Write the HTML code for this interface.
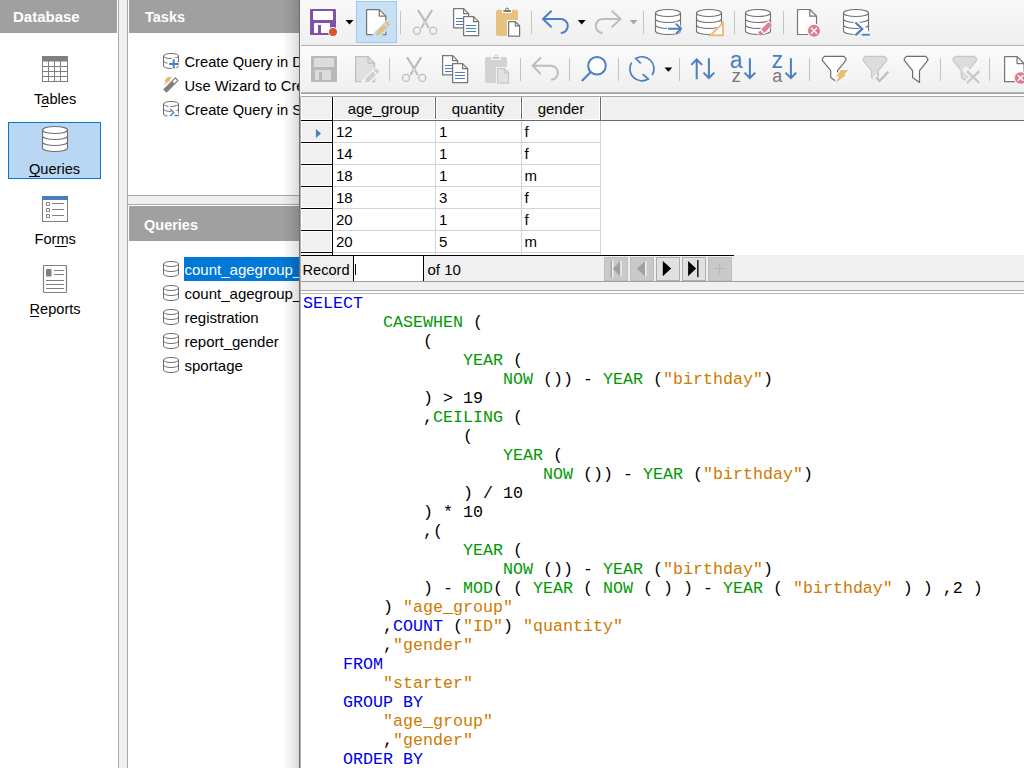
<!DOCTYPE html>
<html><head><meta charset="utf-8"><title>Base</title>
<style>html,body{margin:0;padding:0;background:#fff;width:1024px;height:768px;overflow:hidden}svg{display:block}</style>
</head><body>
<svg width="1024" height="768" viewBox="0 0 1024 768">
<rect x="0" y="0" width="117" height="33" fill="#a0a0a0"/><rect x="118" y="0" width="1" height="768" fill="#a8a8a8"/><rect x="119" y="0" width="8" height="768" fill="#f0f0f0"/><rect x="127" y="0" width="1" height="768" fill="#a8a8a8"/><rect x="129" y="0" width="180" height="33" fill="#a0a0a0"/><rect x="128" y="195" width="180" height="1" fill="#a8a8a8"/><rect x="128" y="196" width="180" height="8" fill="#f0f0f0"/><rect x="128" y="204" width="180" height="1" fill="#a8a8a8"/><rect x="129" y="206" width="180" height="35" fill="#a0a0a0"/><text x="13" y="21.8" font-family="Liberation Sans" font-size="15" font-weight="bold" fill="#fff">Database</text><text x="145" y="22" font-family="Liberation Sans" font-size="14.5" font-weight="bold" fill="#fff">Tasks</text><text x="144" y="230" font-family="Liberation Sans" font-size="14.5" font-weight="bold" fill="#fff">Queries</text><rect x="8.5" y="122.5" width="92" height="56" fill="#b9d7f2" stroke="#0078d7" stroke-width="1"/><rect x="42.5" y="56.5" width="25" height="25" fill="#fff" stroke="#808080" stroke-width="1"/><rect x="42" y="56" width="26" height="5.5" fill="#808080"/><path d="M42,66.5 H68 M42,71.5 H68 M42,76.5 H68 M48.5,61 V82 M54.5,61 V82 M60.5,61 V82" stroke="#808080" stroke-width="1"/><path d="M42.5,130 L42.5,148 A12.5,3.5 0 0 0 67.5,148 L67.5,130 Z" fill="#fff"/><ellipse cx="55" cy="130" rx="12.5" ry="3.5" fill="#fff" stroke="#6e6e6e" stroke-width="1.1"/><path d="M42.5,130 L42.5,148 M67.5,130 L67.5,148" stroke="#6e6e6e" stroke-width="1.1" fill="none"/><path d="M42.5,136 A12.5,3.5 0 0 0 67.5,136" stroke="#6e6e6e" stroke-width="1.1" fill="none"/><path d="M42.5,142 A12.5,3.5 0 0 0 67.5,142" stroke="#6e6e6e" stroke-width="1.1" fill="none"/><path d="M42.5,148 A12.5,3.5 0 0 0 67.5,148" stroke="#6e6e6e" stroke-width="1.1" fill="none"/><rect x="42.5" y="196.5" width="25" height="25" fill="#fff" stroke="#808080" stroke-width="1"/><rect x="42" y="196" width="26" height="4" fill="#4a7ebb"/><path d="M46.5,202.5 h3 v3 h-3 z M46.5,208.5 h3 v3 h-3 z M46.5,214.5 h3 v3 h-3 z" fill="none" stroke="#808080" stroke-width="1"/><path d="M52,203.5 H64 M52,209.5 H64 M52,215.5 H64" stroke="#808080" stroke-width="1"/><rect x="43.5" y="265.5" width="23" height="27" fill="#fff" stroke="#808080" stroke-width="1.2" rx="0.8"/><rect x="46" y="269" width="5.5" height="7.5" rx="0.8" fill="#808080"/><path d="M54,270.5 H64 M54,274.5 H64 M46,280.5 H64 M46,284.5 H64 M46,288.5 H64" stroke="#808080" stroke-width="1"/><text x="34" y="103.8" font-family="Liberation Sans" font-size="14.6" fill="#000">Tables</text><rect x="41" y="106" width="7" height="1" fill="#000"/><text x="29" y="174" font-family="Liberation Sans" font-size="14.6" fill="#000">Queries</text><rect x="29" y="176" width="11" height="1" fill="#000"/><text x="34.5" y="243.8" font-family="Liberation Sans" font-size="14.6" fill="#000">Forms</text><rect x="55" y="246" width="12" height="1" fill="#000"/><text x="29.5" y="313.8" font-family="Liberation Sans" font-size="14.6" fill="#000">Reports</text><rect x="30" y="316" width="9" height="1" fill="#000"/><path d="M163.5,56 L163.5,66 A7.5,2.5 0 0 0 178.5,66 L178.5,56 Z" fill="#fff"/><ellipse cx="171" cy="56" rx="7.5" ry="2.5" fill="#fff" stroke="#707070" stroke-width="1.0"/><path d="M163.5,56 L163.5,66 M178.5,56 L178.5,66" stroke="#707070" stroke-width="1.0" fill="none"/><path d="M163.5,61 A7.5,2.5 0 0 0 178.5,61" stroke="#707070" stroke-width="1.0" fill="none"/><path d="M163.5,66 A7.5,2.5 0 0 0 178.5,66" stroke="#707070" stroke-width="1.0" fill="none"/><path d="M167.5,63.9 H180 M173.7,58 V70" stroke="#fff" stroke-width="4"/><path d="M169.2,63.9 H178.8 M173.7,59.2 V68.6" stroke="#4a7fc1" stroke-width="2"/><path d="M163.1,89.4 L175.4,77.1 L178.75,80.5 L166.6,92.75 Z" fill="#808080"/><path d="M172.6,81.6 L175.4,78.8 L177,80.4 L174.2,83.2 Z" fill="#fff"/><path d="M167.5,77 H172 L169.3,80.2 H170.5 L163.2,85.8 L166.2,81.3 H164 Z" fill="#e8b868"/><path d="M163.5,104 L163.5,114 A7.5,2.5 0 0 0 178.5,114 L178.5,104 Z" fill="#fff"/><ellipse cx="171" cy="104" rx="7.5" ry="2.5" fill="#fff" stroke="#707070" stroke-width="1.0"/><path d="M163.5,104 L163.5,114 M178.5,104 L178.5,114" stroke="#707070" stroke-width="1.0" fill="none"/><path d="M163.5,109 A7.5,2.5 0 0 0 178.5,109" stroke="#707070" stroke-width="1.0" fill="none"/><path d="M163.5,114 A7.5,2.5 0 0 0 178.5,114" stroke="#707070" stroke-width="1.0" fill="none"/><path d="M168,107 L175.5,112.6 L168,118 M172.5,115.3 H180" stroke="#fff" stroke-width="3.5" fill="none"/><path d="M170.2,108.9 L173.7,112.5 L170.2,116.1 M174.4,115.5 H178.8" stroke="#4a7fc1" stroke-width="1.4" fill="none"/><text x="184.5" y="66.8" font-family="Liberation Sans" font-size="14.7" fill="#000">Create Query in Design...</text><text x="184.5" y="90.7" font-family="Liberation Sans" font-size="14.7" fill="#000">Use Wizard to Create Query...</text><text x="184.5" y="114.5" font-family="Liberation Sans" font-size="14.7" fill="#000">Create Query in SQL View...</text><path d="M163.5,264 L163.5,274 A7.5,2.5 0 0 0 178.5,274 L178.5,264 Z" fill="#fff"/><ellipse cx="171" cy="264" rx="7.5" ry="2.5" fill="#fff" stroke="#707070" stroke-width="1.0"/><path d="M163.5,264 L163.5,274 M178.5,264 L178.5,274" stroke="#707070" stroke-width="1.0" fill="none"/><path d="M163.5,269 A7.5,2.5 0 0 0 178.5,269" stroke="#707070" stroke-width="1.0" fill="none"/><path d="M163.5,274 A7.5,2.5 0 0 0 178.5,274" stroke="#707070" stroke-width="1.0" fill="none"/><rect x="184" y="257" width="130" height="24" fill="#0078d7"/><text x="184.5" y="274.5" font-family="Liberation Sans" font-size="15" fill="#fff">count_agegroup_gender</text><path d="M163.5,288 L163.5,298 A7.5,2.5 0 0 0 178.5,298 L178.5,288 Z" fill="#fff"/><ellipse cx="171" cy="288" rx="7.5" ry="2.5" fill="#fff" stroke="#707070" stroke-width="1.0"/><path d="M163.5,288 L163.5,298 M178.5,288 L178.5,298" stroke="#707070" stroke-width="1.0" fill="none"/><path d="M163.5,293 A7.5,2.5 0 0 0 178.5,293" stroke="#707070" stroke-width="1.0" fill="none"/><path d="M163.5,298 A7.5,2.5 0 0 0 178.5,298" stroke="#707070" stroke-width="1.0" fill="none"/><text x="184.5" y="298.5" font-family="Liberation Sans" font-size="15" fill="#000">count_agegroup_gender_2</text><path d="M163.5,312 L163.5,322 A7.5,2.5 0 0 0 178.5,322 L178.5,312 Z" fill="#fff"/><ellipse cx="171" cy="312" rx="7.5" ry="2.5" fill="#fff" stroke="#707070" stroke-width="1.0"/><path d="M163.5,312 L163.5,322 M178.5,312 L178.5,322" stroke="#707070" stroke-width="1.0" fill="none"/><path d="M163.5,317 A7.5,2.5 0 0 0 178.5,317" stroke="#707070" stroke-width="1.0" fill="none"/><path d="M163.5,322 A7.5,2.5 0 0 0 178.5,322" stroke="#707070" stroke-width="1.0" fill="none"/><text x="184.5" y="322.5" font-family="Liberation Sans" font-size="15" fill="#000">registration</text><path d="M163.5,336 L163.5,346 A7.5,2.5 0 0 0 178.5,346 L178.5,336 Z" fill="#fff"/><ellipse cx="171" cy="336" rx="7.5" ry="2.5" fill="#fff" stroke="#707070" stroke-width="1.0"/><path d="M163.5,336 L163.5,346 M178.5,336 L178.5,346" stroke="#707070" stroke-width="1.0" fill="none"/><path d="M163.5,341 A7.5,2.5 0 0 0 178.5,341" stroke="#707070" stroke-width="1.0" fill="none"/><path d="M163.5,346 A7.5,2.5 0 0 0 178.5,346" stroke="#707070" stroke-width="1.0" fill="none"/><text x="184.5" y="346.5" font-family="Liberation Sans" font-size="15" fill="#000">report_gender</text><path d="M163.5,360 L163.5,370 A7.5,2.5 0 0 0 178.5,370 L178.5,360 Z" fill="#fff"/><ellipse cx="171" cy="360" rx="7.5" ry="2.5" fill="#fff" stroke="#707070" stroke-width="1.0"/><path d="M163.5,360 L163.5,370 M178.5,360 L178.5,370" stroke="#707070" stroke-width="1.0" fill="none"/><path d="M163.5,365 A7.5,2.5 0 0 0 178.5,365" stroke="#707070" stroke-width="1.0" fill="none"/><path d="M163.5,370 A7.5,2.5 0 0 0 178.5,370" stroke="#707070" stroke-width="1.0" fill="none"/><text x="184.5" y="370.5" font-family="Liberation Sans" font-size="15" fill="#000">sportage</text><defs><linearGradient id="sh" x1="0" x2="1" y1="0" y2="0"><stop offset="0" stop-color="#000" stop-opacity="0"/><stop offset="0.5" stop-color="#000" stop-opacity="0.06"/><stop offset="1" stop-color="#000" stop-opacity="0.145"/></linearGradient></defs><rect x="282" y="0" width="17" height="768" fill="url(#sh)"/>
<defs><linearGradient id="tb1" x1="0" x2="0" y1="0" y2="1"><stop offset="0" stop-color="#f9f9f9"/><stop offset="1" stop-color="#efefef"/></linearGradient><linearGradient id="tb2" x1="0" x2="0" y1="0" y2="1"><stop offset="0" stop-color="#fbfbfb"/><stop offset="1" stop-color="#efefef"/></linearGradient></defs><rect x="299" y="0" width="725" height="768" fill="#fff"/><rect x="301" y="0" width="723" height="45" fill="url(#tb1)"/><rect x="301" y="45" width="723" height="1" fill="#b0b0b0"/><rect x="301" y="46" width="723" height="1" fill="#ffffff"/><rect x="301" y="47" width="723" height="46" fill="url(#tb2)"/><rect x="301" y="92" width="723" height="1" fill="#b8b8b8"/><rect x="301" y="93" width="723" height="1" fill="#a0a0a0"/><rect x="301" y="94" width="723" height="2" fill="#fdfdfd"/><rect x="301" y="96" width="723" height="1" fill="#a8a8a8"/><rect x="300" y="97" width="724" height="23" fill="#f0f0f0"/><rect x="300" y="120" width="33" height="1" fill="#000"/><rect x="333" y="120" width="691" height="1" fill="#6b6b6b"/><rect x="300" y="121" width="32" height="134" fill="#f0f0f0"/><rect x="332" y="97" width="1" height="158" fill="#000"/><rect x="435" y="97" width="1" height="23" fill="#6b6b6b"/><rect x="434" y="97" width="1" height="22" fill="#fff"/><rect x="436" y="97" width="1" height="22" fill="#fff"/><rect x="435" y="121" width="1" height="134" fill="#d4d4d4"/><rect x="521" y="97" width="1" height="23" fill="#6b6b6b"/><rect x="520" y="97" width="1" height="22" fill="#fff"/><rect x="522" y="97" width="1" height="22" fill="#fff"/><rect x="521" y="121" width="1" height="134" fill="#d4d4d4"/><rect x="600" y="97" width="1" height="23" fill="#6b6b6b"/><rect x="599" y="97" width="1" height="22" fill="#fff"/><rect x="601" y="97" width="1" height="22" fill="#fff"/><rect x="600" y="121" width="1" height="134" fill="#d4d4d4"/><rect x="333" y="119" width="267" height="1" fill="#fff"/><rect x="333" y="97" width="1" height="22" fill="#fff"/><rect x="301" y="97" width="1" height="22" fill="#fff"/><rect x="331" y="97" width="1" height="22" fill="#fff"/><rect x="301" y="119" width="31" height="1" fill="#fff"/><rect x="301" y="121" width="1" height="20" fill="#fff"/><rect x="331" y="121" width="1" height="20" fill="#fff"/><rect x="301" y="121" width="31" height="1" fill="#fff"/><rect x="301" y="141" width="31" height="1" fill="#fff"/><rect x="301" y="143" width="1" height="20" fill="#fff"/><rect x="331" y="143" width="1" height="20" fill="#fff"/><rect x="301" y="143" width="31" height="1" fill="#fff"/><rect x="301" y="163" width="31" height="1" fill="#fff"/><rect x="301" y="165" width="1" height="20" fill="#fff"/><rect x="331" y="165" width="1" height="20" fill="#fff"/><rect x="301" y="165" width="31" height="1" fill="#fff"/><rect x="301" y="185" width="31" height="1" fill="#fff"/><rect x="301" y="187" width="1" height="20" fill="#fff"/><rect x="331" y="187" width="1" height="20" fill="#fff"/><rect x="301" y="187" width="31" height="1" fill="#fff"/><rect x="301" y="207" width="31" height="1" fill="#fff"/><rect x="301" y="209" width="1" height="20" fill="#fff"/><rect x="331" y="209" width="1" height="20" fill="#fff"/><rect x="301" y="209" width="31" height="1" fill="#fff"/><rect x="301" y="229" width="31" height="1" fill="#fff"/><rect x="301" y="231" width="1" height="20" fill="#fff"/><rect x="331" y="231" width="1" height="20" fill="#fff"/><rect x="301" y="231" width="31" height="1" fill="#fff"/><rect x="301" y="251" width="31" height="1" fill="#fff"/><rect x="301" y="253" width="1" height="20" fill="#fff"/><rect x="331" y="253" width="1" height="20" fill="#fff"/><rect x="301" y="253" width="31" height="1" fill="#fff"/><rect x="301" y="273" width="31" height="1" fill="#fff"/><rect x="300" y="142" width="32" height="1" fill="#000"/><rect x="333" y="142" width="268" height="1" fill="#d4d4d4"/><text x="336" y="137" font-family="Liberation Sans" font-size="15" fill="#000">12</text><text x="439" y="137" font-family="Liberation Sans" font-size="15" fill="#000">1</text><text x="524.5" y="137" font-family="Liberation Sans" font-size="15" fill="#000">f</text><rect x="300" y="164" width="32" height="1" fill="#000"/><rect x="333" y="164" width="268" height="1" fill="#d4d4d4"/><text x="336" y="159" font-family="Liberation Sans" font-size="15" fill="#000">14</text><text x="439" y="159" font-family="Liberation Sans" font-size="15" fill="#000">1</text><text x="524.5" y="159" font-family="Liberation Sans" font-size="15" fill="#000">f</text><rect x="300" y="186" width="32" height="1" fill="#000"/><rect x="333" y="186" width="268" height="1" fill="#d4d4d4"/><text x="336" y="181" font-family="Liberation Sans" font-size="15" fill="#000">18</text><text x="439" y="181" font-family="Liberation Sans" font-size="15" fill="#000">1</text><text x="524.5" y="181" font-family="Liberation Sans" font-size="15" fill="#000">m</text><rect x="300" y="208" width="32" height="1" fill="#000"/><rect x="333" y="208" width="268" height="1" fill="#d4d4d4"/><text x="336" y="203" font-family="Liberation Sans" font-size="15" fill="#000">18</text><text x="439" y="203" font-family="Liberation Sans" font-size="15" fill="#000">3</text><text x="524.5" y="203" font-family="Liberation Sans" font-size="15" fill="#000">f</text><rect x="300" y="230" width="32" height="1" fill="#000"/><rect x="333" y="230" width="268" height="1" fill="#d4d4d4"/><text x="336" y="225" font-family="Liberation Sans" font-size="15" fill="#000">20</text><text x="439" y="225" font-family="Liberation Sans" font-size="15" fill="#000">1</text><text x="524.5" y="225" font-family="Liberation Sans" font-size="15" fill="#000">f</text><rect x="300" y="252" width="32" height="1" fill="#000"/><rect x="333" y="252" width="268" height="1" fill="#d4d4d4"/><text x="336" y="247" font-family="Liberation Sans" font-size="15" fill="#000">20</text><text x="439" y="247" font-family="Liberation Sans" font-size="15" fill="#000">5</text><text x="524.5" y="247" font-family="Liberation Sans" font-size="15" fill="#000">m</text><path d="M315.9,129 L321,133.4 L315.9,137.9 Z" fill="#4a7fc1"/><text x="383.5" y="114.2" text-anchor="middle" font-family="Liberation Sans" font-size="15" fill="#000">age_group</text><text x="478" y="114.2" text-anchor="middle" font-family="Liberation Sans" font-size="15" fill="#000">quantity</text><text x="561" y="114.2" text-anchor="middle" font-family="Liberation Sans" font-size="15" fill="#000">gender</text><rect x="300" y="255" width="724" height="26" fill="#f0f0f0"/><rect x="300" y="255" width="434" height="1" fill="#000"/><rect x="300" y="281" width="724" height="1" fill="#a0a0a0"/><rect x="300" y="282" width="724" height="8" fill="#f0f0f0"/><rect x="300" y="290" width="724" height="1" fill="#a8a8a8"/><rect x="300" y="291" width="724" height="2" fill="#ffffff"/><rect x="300" y="293" width="724" height="1" fill="#b4b4bb"/><rect x="353" y="256" width="71" height="25" fill="#fff"/><rect x="353" y="256" width="1" height="25" fill="#000"/><rect x="423" y="256" width="1" height="25" fill="#000"/><text x="302.5" y="274.8" font-family="Liberation Sans" font-size="14.6" fill="#000">Record</text><rect x="355" y="264" width="1" height="11" fill="#200000"/><text x="427.5" y="274.8" font-family="Liberation Sans" font-size="15" fill="#000">of 10</text><rect x="604.5" y="257.5" width="23" height="23" fill="#c9c9c9" stroke="#bdbdbd" stroke-width="1"/><rect x="630.5" y="257.5" width="23" height="23" fill="#c9c9c9" stroke="#bdbdbd" stroke-width="1"/><rect x="656.5" y="257.5" width="23" height="23" fill="#e1e1e1" stroke="#adadad" stroke-width="1"/><rect x="682.5" y="257.5" width="23" height="23" fill="#e1e1e1" stroke="#adadad" stroke-width="1"/><rect x="708.5" y="257.5" width="23" height="23" fill="#c9c9c9" stroke="#bdbdbd" stroke-width="1"/><rect x="611.8" y="260.6" width="1.6" height="17" fill="#f4f4f4"/><rect x="610.6" y="260.6" width="1.2" height="17" fill="#a0a0a0"/><path d="M612.9,268.8 L620.4,261.1 L620.4,276.4 Z" fill="#a0a0a0"/><rect x="620.4" y="261.1" width="1.4" height="15.3" fill="#f4f4f4"/><path d="M637,268.8 L645.1,261.1 L645.1,276.4 Z" fill="#a0a0a0"/><rect x="645.1" y="261.1" width="1.4" height="15.3" fill="#f4f4f4"/><path d="M662.8,261.1 L671.1,268.6 L662.8,276.2 Z" fill="#000"/><path d="M688.1,261.1 L696.1,268.6 L688.1,276.2 Z" fill="#000"/><rect x="697.2" y="260" width="1.3" height="17.2" fill="#000"/><path d="M714,268.5 H725 M719.5,263 V274" stroke="#b8b8b8" stroke-width="1"/><rect x="299" y="0" width="1" height="768" fill="#707070"/><rect x="300" y="0" width="1" height="97" fill="#f4f4f4"/><rect x="300" y="97" width="1" height="671" fill="#b0b0b0"/>
<rect x="310" y="9" width="26" height="26" rx="1" fill="#8150a8"/><rect x="313" y="11" width="20" height="9" rx="0.8" fill="#fff"/><rect x="314" y="23" width="16" height="10" rx="0.8" fill="#fff"/><rect x="318" y="25" width="3" height="8" fill="#8150a8"/><circle cx="333" cy="32" r="5" fill="#fff"/><circle cx="333" cy="32" r="4" fill="#d9532c"/><path d="M345.5,20 L353.5,20 L349.5,24.5 Z" fill="#000"/><rect x="356.5" y="1.5" width="40" height="41" fill="#c7e0f6" stroke="#99c8f0" stroke-width="1"/><path d="M366.6,9.6 L379.3,9.6 L385.8,16.1 L385.8,34.6 L366.6,34.6 Z" fill="#fff" stroke="#767676" stroke-width="1.25" stroke-linejoin="round"/><path d="M379.3,9.6 L379.3,16.1 L385.8,16.1" fill="none" stroke="#767676" stroke-width="1.25" stroke-linejoin="round"/><path d="M375,37 L389.5,22.5" stroke="#c7e0f6" stroke-width="8" stroke-linecap="butt"/><path d="M376,35.8 L377,31.3 L383.8,24.5 L387,27.7 L380.2,34.5 Z" fill="#e8be78"/><path d="M385,23.3 L386.9,21.4 L390.1,24.6 L388.2,26.5 Z" fill="#e8be78" stroke="#e8be78" stroke-width="0.6" stroke-linejoin="round"/><rect x="400" y="11" width="1" height="23" fill="#c4c4c4"/><path d="M418.00,10.00 L425.10,21.40 L432.20,10.00" stroke="#bcbcbc" stroke-width="2.2" fill="none" stroke-linejoin="round"/><path d="M425.10,21.40 L421.40,28.00 M425.10,21.40 L428.80,28.00" stroke="#bcbcbc" stroke-width="2" fill="none"/><circle cx="425.10" cy="22.60" r="0.9" fill="#f6f6f6"/><circle cx="417.00" cy="30.70" r="3.5" fill="none" stroke="#bcbcbc" stroke-width="1.3"/><circle cx="433.20" cy="30.70" r="3.5" fill="none" stroke="#bcbcbc" stroke-width="1.3"/><path d="M453.6,8.6 L463.6,8.6 L468.6,13.6 L468.6,27.799999999999997 L453.6,27.799999999999997 Z" fill="#fff" stroke="#767676" stroke-width="1.25" stroke-linejoin="round"/><path d="M463.6,8.6 L463.6,13.6 L468.6,13.6" fill="none" stroke="#767676" stroke-width="1.25" stroke-linejoin="round"/><path d="M456,18.5 H463 M456,21.5 H463 M456,24.5 H463" stroke="#4a7fc1" stroke-width="1.1"/><rect x="462" y="15" width="18" height="22" fill="#fff" opacity="0"/><path d="M463.6,16.6 L473.6,16.6 L478.6,21.6 L478.6,35.6 L463.6,35.6 Z" fill="#fff" stroke="#767676" stroke-width="1.25" stroke-linejoin="round"/><path d="M473.6,16.6 L473.6,21.6 L478.6,21.6" fill="none" stroke="#767676" stroke-width="1.25" stroke-linejoin="round"/><path d="M466,25.5 H476 M466,28.5 H476 M466,31.5 H476" stroke="#4a7fc1" stroke-width="1.1"/><rect x="496" y="9.8" width="22" height="26.2" rx="2" fill="#e8c280"/><rect x="502" y="9" width="10" height="4" fill="#fff"/><rect x="503.3" y="10.2" width="7.6" height="1.7" fill="#6e6e6e"/><circle cx="507.1" cy="9.6" r="1.5" fill="none" stroke="#6e6e6e" stroke-width="1"/><rect x="507" y="20" width="11" height="16" fill="#fff"/><path d="M508.6,21.6 L515.4,21.6 L519.6,25.8 L519.6,36.2 L508.6,36.2 Z" fill="#fff" stroke="#767676" stroke-width="1.25" stroke-linejoin="round"/><path d="M515.4,21.6 L515.4,25.8 L519.6,25.8" fill="none" stroke="#767676" stroke-width="1.25" stroke-linejoin="round"/><rect x="531" y="11" width="1" height="23" fill="#c4c4c4"/><path d="M551.6,10.7 L543,19 L551.6,27.3 M543,19 H560.8 A7,7 0 0 1 560.8,33" stroke="#4a7fc1" stroke-width="2" fill="none" stroke-linejoin="miter"/><path d="M577.8,20 L585.6,20 L581.7,24.4 Z" fill="#000"/><path d="M611.7,10.7 L620.6,19 L611.7,27.3 M620.6,19 H602.8 A7,7 0 0 0 602.8,33" stroke="#bdbdbd" stroke-width="2" fill="none"/><path d="M629.8,20 L637.4,20 L633.5999999999999,24.4 Z" fill="#a8a8a8"/><rect x="643" y="11" width="1" height="23" fill="#c4c4c4"/><path d="M655.5,13 L655.5,31 A12.5,3.5 0 0 0 680.5,31 L680.5,13 Z" fill="#fff"/><ellipse cx="668" cy="13" rx="12.5" ry="3.5" fill="#fff" stroke="#707070" stroke-width="1.1"/><path d="M655.5,13 L655.5,31 M680.5,13 L680.5,31" stroke="#707070" stroke-width="1.1" fill="none"/><path d="M655.5,19 A12.5,3.5 0 0 0 680.5,19" stroke="#707070" stroke-width="1.1" fill="none"/><path d="M655.5,25 A12.5,3.5 0 0 0 680.5,25" stroke="#707070" stroke-width="1.1" fill="none"/><path d="M655.5,31 A12.5,3.5 0 0 0 680.5,31" stroke="#707070" stroke-width="1.1" fill="none"/><clipPath id="cc1"><path d="M655.5,13 A12.5,3.5 0 0 1 680.5,13 L680.5,31 A12.5,3.5 0 0 1 655.5,31 Z"/></clipPath><g clip-path="url(#cc1)"><path d="M667,28.8 H682 M675.2,23 L681.5,28.8 L675.2,34.6" stroke="#fff" stroke-width="4" fill="none"/></g><path d="M668,28.8 H681 M675.8,23.6 L681,28.8 L675.8,34" stroke="#4a7fc1" stroke-width="1.9" fill="none"/><path d="M696.5,13 L696.5,31 A12.5,3.5 0 0 0 721.5,31 L721.5,13 Z" fill="#fff"/><ellipse cx="709" cy="13" rx="12.5" ry="3.5" fill="#fff" stroke="#707070" stroke-width="1.1"/><path d="M696.5,13 L696.5,31 M721.5,13 L721.5,31" stroke="#707070" stroke-width="1.1" fill="none"/><path d="M696.5,19 A12.5,3.5 0 0 0 721.5,19" stroke="#707070" stroke-width="1.1" fill="none"/><path d="M696.5,25 A12.5,3.5 0 0 0 721.5,25" stroke="#707070" stroke-width="1.1" fill="none"/><path d="M696.5,31 A12.5,3.5 0 0 0 721.5,31" stroke="#707070" stroke-width="1.1" fill="none"/><clipPath id="cc2"><path d="M696.5,13 A12.5,3.5 0 0 1 721.5,13 L721.5,31 A12.5,3.5 0 0 1 696.5,31 Z"/></clipPath><g clip-path="url(#cc2)"><path d="M707.3,36.7 L724.5,36.7 L724.5,20 Z" fill="#fff"/></g><path d="M710.5,35.2 L723,35.2 L723,23 Z" fill="#fff" stroke="#e8be78" stroke-width="2" stroke-linejoin="miter"/><rect x="734" y="11" width="1" height="23" fill="#c4c4c4"/><path d="M745.5,13 L745.5,31 A12.5,3.5 0 0 0 770.5,31 L770.5,13 Z" fill="#fff"/><ellipse cx="758" cy="13" rx="12.5" ry="3.5" fill="#fff" stroke="#707070" stroke-width="1.1"/><path d="M745.5,13 L745.5,31 M770.5,13 L770.5,31" stroke="#707070" stroke-width="1.1" fill="none"/><path d="M745.5,19 A12.5,3.5 0 0 0 770.5,19" stroke="#707070" stroke-width="1.1" fill="none"/><path d="M745.5,25 A12.5,3.5 0 0 0 770.5,25" stroke="#707070" stroke-width="1.1" fill="none"/><path d="M745.5,31 A12.5,3.5 0 0 0 770.5,31" stroke="#707070" stroke-width="1.1" fill="none"/><clipPath id="cc3"><path d="M745.5,13 A12.5,3.5 0 0 1 770.5,13 L770.5,31 A12.5,3.5 0 0 1 745.5,31 Z"/></clipPath><g clip-path="url(#cc3)"><path d="M768.6,20.3 L773.5,25.3 L763.2,35.5 L758.5,37.5 L756.3,32.6 Z" fill="#fff"/></g><path d="M768.6,21.9 L771.9,25.3 L764.3,32.9 L761.2,29.3 Z M760.3,30.6 L763.2,33.6 L760.9,35.8 L758,32.6 Z" fill="#e47e93"/><rect x="783" y="11" width="1" height="23" fill="#c4c4c4"/><path d="M797.5,9.5 L809.8,9.5 L816.5,16.2 L816.5,34.5 L797.5,34.5 Z" fill="#fff" stroke="#767676" stroke-width="1.2" stroke-linejoin="round"/><path d="M809.8,9.5 L809.8,16.2 L816.5,16.2" fill="none" stroke="#767676" stroke-width="1.2" stroke-linejoin="round"/><circle cx="814" cy="30.7" r="7.2" fill="#f8f8f8"/><circle cx="814" cy="30.7" r="6" fill="#e27a8e"/><path d="M811,27.7 L817,33.7 M817,27.7 L811,33.7" stroke="#fff" stroke-width="1.4"/><path d="M843.5,13 L843.5,31 A12.5,3.5 0 0 0 868.5,31 L868.5,13 Z" fill="#fff"/><ellipse cx="856" cy="13" rx="12.5" ry="3.5" fill="#fff" stroke="#707070" stroke-width="1.1"/><path d="M843.5,13 L843.5,31 M868.5,13 L868.5,31" stroke="#707070" stroke-width="1.1" fill="none"/><path d="M843.5,19 A12.5,3.5 0 0 0 868.5,19" stroke="#707070" stroke-width="1.1" fill="none"/><path d="M843.5,25 A12.5,3.5 0 0 0 868.5,25" stroke="#707070" stroke-width="1.1" fill="none"/><path d="M843.5,31 A12.5,3.5 0 0 0 868.5,31" stroke="#707070" stroke-width="1.1" fill="none"/><clipPath id="cc4"><path d="M843.5,13 A12.5,3.5 0 0 1 868.5,13 L868.5,31 A12.5,3.5 0 0 1 843.5,31 Z"/></clipPath><g clip-path="url(#cc4)"><path d="M854.5,21.5 L863.5,28.9 L854.5,36.2" stroke="#fff" stroke-width="5" fill="none"/><rect x="857" y="30.6" width="16" height="10" fill="#fff"/></g><path d="M856,33 H871" stroke="#f6f6f6" stroke-width="3"/><path d="M855.4,22.5 L862.3,28.9 L855.4,35.2" stroke="#4a7fc1" stroke-width="2.2" fill="none"/><path d="M862,34.75 H869.8" stroke="#4a7fc1" stroke-width="1.8"/><rect x="311" y="56" width="26" height="26" rx="1" fill="#b9b9b9"/><rect x="314" y="58" width="20" height="9" fill="#dcdcdc"/><rect x="315" y="70" width="16" height="10" fill="#dcdcdc"/><rect x="319" y="72" width="3" height="8" fill="#b9b9b9"/><path d="M355.6,56.6 L368.1,56.6 L374.6,63.1 L374.6,81.6 L355.6,81.6 Z" fill="#e0e0e0" stroke="#c0c0c0" stroke-width="1.25" stroke-linejoin="round"/><path d="M368.1,56.6 L368.1,63.1 L374.6,63.1" fill="none" stroke="#c0c0c0" stroke-width="1.25" stroke-linejoin="round"/><path d="M364,84 L378.5,69.5" stroke="#f3f3f3" stroke-width="8"/><path d="M365,82.8 L366,78.3 L372.8,71.5 L376,74.7 L369.2,81.5 Z" fill="#cfcfcf"/><path d="M374,70.3 L375.9,68.4 L379.1,71.6 L377.2,73.5 Z" fill="#cfcfcf" stroke="#cfcfcf" stroke-width="0.6" stroke-linejoin="round"/><rect x="389" y="58" width="1" height="23" fill="#c4c4c4"/><path d="M407.00,57.20 L414.10,68.60 L421.20,57.20" stroke="#bcbcbc" stroke-width="2.2" fill="none" stroke-linejoin="round"/><path d="M414.10,68.60 L410.40,75.20 M414.10,68.60 L417.80,75.20" stroke="#bcbcbc" stroke-width="2" fill="none"/><circle cx="414.10" cy="69.80" r="0.9" fill="#f6f6f6"/><circle cx="406.00" cy="77.90" r="3.5" fill="none" stroke="#bcbcbc" stroke-width="1.3"/><circle cx="422.20" cy="77.90" r="3.5" fill="none" stroke="#bcbcbc" stroke-width="1.3"/><path d="M442.6,55.6 L452.6,55.6 L457.6,60.6 L457.6,74.8 L442.6,74.8 Z" fill="#fff" stroke="#767676" stroke-width="1.25" stroke-linejoin="round"/><path d="M452.6,55.6 L452.6,60.6 L457.6,60.6" fill="none" stroke="#767676" stroke-width="1.25" stroke-linejoin="round"/><path d="M445,65.5 H452 M445,68.5 H452 M445,71.5 H452" stroke="#4a7fc1" stroke-width="1.1"/><path d="M452.6,63.6 L462.6,63.6 L467.6,68.6 L467.6,82.6 L452.6,82.6 Z" fill="#fff" stroke="#767676" stroke-width="1.25" stroke-linejoin="round"/><path d="M462.6,63.6 L462.6,68.6 L467.6,68.6" fill="none" stroke="#767676" stroke-width="1.25" stroke-linejoin="round"/><path d="M455,72.5 H465 M455,75.5 H465 M455,78.5 H465" stroke="#4a7fc1" stroke-width="1.1"/><rect x="485" y="57" width="22" height="26" rx="2" fill="#d2d2d2"/><rect x="491" y="56" width="10" height="4" fill="#f8f8f8"/><rect x="492.3" y="57.2" width="7.6" height="1.7" fill="#c8c8c8"/><circle cx="496.1" cy="56.6" r="1.5" fill="none" stroke="#c8c8c8" stroke-width="1"/><rect x="496" y="67" width="11" height="16" fill="#f3f3f3"/><path d="M497.6,68.6 L504.40000000000003,68.6 L508.6,72.8 L508.6,83.19999999999999 L497.6,83.19999999999999 Z" fill="#e2e2e2" stroke="#c8c8c8" stroke-width="1.25" stroke-linejoin="round"/><path d="M504.40000000000003,68.6 L504.40000000000003,72.8 L508.6,72.8" fill="none" stroke="#c8c8c8" stroke-width="1.25" stroke-linejoin="round"/><rect x="520" y="58" width="1" height="23" fill="#c4c4c4"/><path d="M540.9,57.5 L532.6,65.8 L540.9,74.1 M532.6,65.8 H550.9 A7,7 0 0 1 550.9,79.8" stroke="#bdbdbd" stroke-width="2" fill="none"/><rect x="569" y="58" width="1" height="23" fill="#c4c4c4"/><circle cx="597" cy="65.8" r="8.8" fill="#fff" stroke="#4a7fc1" stroke-width="2"/><path d="M590.5,72.3 L581.8,81" stroke="#4a7fc1" stroke-width="2.1"/><rect x="618" y="58" width="1" height="23" fill="#c4c4c4"/><path d="M631.6,62.6 A12,12 0 0 0 648.26,78.98 L642.6,74.2" stroke="#4a7fc1" stroke-width="1.7" fill="none"/><path d="M640.8,63.4 L635.7,58.5 A12,12 0 0 1 652.2,75.0" stroke="#4a7fc1" stroke-width="1.7" fill="none"/><path d="M664.5,67.4 L672.3,67.4 L668.4,71.8 Z" fill="#000"/><rect x="679" y="58" width="1" height="23" fill="#c4c4c4"/><path d="M696.7,59.5 V79.3 M691.3,64.9 L696.7,59.5 L702.1,64.9" stroke="#4a7fc1" stroke-width="2" fill="none"/><path d="M708.9,58.2 V78 M703.5,72.6 L708.9,78 L714.3,72.6" stroke="#4a7fc1" stroke-width="2" fill="none"/><text x="729.8" y="67.6" font-family="Liberation Sans" font-size="23" fill="#4a7fc1">a</text><text x="731.5" y="81.8" font-family="Liberation Sans" font-size="19" fill="#7a7a7a">z</text><path d="M749.9,58.2 V78 M744.5,72.6 L749.9,78 L755.3,72.6" stroke="#4a7fc1" stroke-width="2" fill="none"/><text x="771.6" y="67.75" font-family="Liberation Sans" font-size="23" fill="#4a7fc1">z</text><text x="772.3" y="81.8" font-family="Liberation Sans" font-size="18" fill="#7a7a7a">a</text><path d="M790.9,58.2 V78 M785.5,72.6 L790.9,78 L796.3,72.6" stroke="#4a7fc1" stroke-width="2" fill="none"/><rect x="809" y="58" width="1" height="23" fill="#c4c4c4"/><path d="M824.50,56.40 L843.80,56.40 L845.90,58.60 L845.90,60.40 L837.60,70.60 L837.60,82.50 L830.70,77.40 L830.70,70.60 L822.40,60.40 L822.40,58.60 Z" fill="#fff" stroke="#6e6e6e" stroke-width="1.2" stroke-linejoin="round"/><path d="M841,70.1 H848.5 L844,74.8 H846.5 L835.5,83.2 L838.9,76.4 H836.1 Z" fill="#fafafa" stroke="#fafafa" stroke-width="2.6" stroke-linejoin="round"/><path d="M841,70.1 H848.5 L844,74.8 H846.5 L835.5,83.2 L838.9,76.4 H836.1 Z" fill="#e9bd72"/><path d="M865.30,56.40 L884.60,56.40 L886.70,58.60 L886.70,60.40 L878.40,70.60 L878.40,82.50 L871.50,77.40 L871.50,70.60 L863.20,60.40 L863.20,58.60 Z" fill="#dcdcdc" stroke="#c6c6c6" stroke-width="1.2" stroke-linejoin="round"/><path d="M874,76 L879.5,82 L890,70" stroke="#f3f3f3" stroke-width="5" fill="none"/><path d="M876.1,77.3 L879.5,81.1 L888.4,71.8" stroke="#bebebe" stroke-width="2.2" fill="none"/><path d="M906.40,56.40 L925.70,56.40 L927.80,58.60 L927.80,60.40 L919.50,70.60 L919.50,82.50 L912.60,77.40 L912.60,70.60 L904.30,60.40 L904.30,58.60 Z" fill="#fff" stroke="#6e6e6e" stroke-width="1.2" stroke-linejoin="round"/><rect x="940" y="58" width="1" height="23" fill="#c4c4c4"/><path d="M955.10,56.40 L974.40,56.40 L976.50,58.60 L976.50,60.40 L968.20,70.60 L968.20,82.50 L961.30,77.40 L961.30,70.60 L953.00,60.40 L953.00,58.60 Z" fill="#dcdcdc" stroke="#c6c6c6" stroke-width="1.2" stroke-linejoin="round"/><path d="M964,68 L982,86 M982,68 L964,86" stroke="#f3f3f3" stroke-width="6"/><path d="M967,71.1 L979.3,83 M979.3,71.1 L967,83" stroke="#c8c8c8" stroke-width="2.4"/><rect x="989" y="58" width="1" height="23" fill="#c4c4c4"/><path d="M1004.6,56.6 L1017.0999999999999,56.6 L1024.1,63.6 L1024.1,81.6 L1004.6,81.6 Z" fill="#fff" stroke="#767676" stroke-width="1.25" stroke-linejoin="round"/><path d="M1017.0999999999999,56.6 L1017.0999999999999,63.6 L1024.1,63.6" fill="none" stroke="#767676" stroke-width="1.25" stroke-linejoin="round"/><circle cx="1020.6" cy="78" r="7" fill="#f3f3f3"/><circle cx="1020.6" cy="78" r="5.8" fill="#e27a8e"/><path d="M1017.8,75.2 L1023.4,80.8 M1023.4,75.2 L1017.8,80.8" stroke="#fff" stroke-width="1.4"/>
<g font-family="Liberation Mono" font-size="16.67" style="white-space:pre"><text x="303" y="307.5"><tspan fill="#0000e6">SELECT</tspan></text><text x="383" y="326.5"><tspan fill="#009900">CASEWHEN</tspan><tspan fill="#000000"> (</tspan></text><text x="423" y="345.5"><tspan fill="#000000">(</tspan></text><text x="463" y="364.5"><tspan fill="#009900">YEAR</tspan><tspan fill="#000000"> (</tspan></text><text x="503" y="383.5"><tspan fill="#009900">NOW</tspan><tspan fill="#000000"> ()) - </tspan><tspan fill="#009900">YEAR</tspan><tspan fill="#000000"> (</tspan><tspan fill="#ce7b00">&quot;birthday&quot;</tspan><tspan fill="#000000">)</tspan></text><text x="423" y="402.5"><tspan fill="#000000">) &gt; 19</tspan></text><text x="423" y="421.5"><tspan fill="#000000">,</tspan><tspan fill="#009900">CEILING</tspan><tspan fill="#000000"> (</tspan></text><text x="463" y="440.5"><tspan fill="#000000">(</tspan></text><text x="503" y="459.5"><tspan fill="#009900">YEAR</tspan><tspan fill="#000000"> (</tspan></text><text x="543" y="478.5"><tspan fill="#009900">NOW</tspan><tspan fill="#000000"> ()) - </tspan><tspan fill="#009900">YEAR</tspan><tspan fill="#000000"> (</tspan><tspan fill="#ce7b00">&quot;birthday&quot;</tspan><tspan fill="#000000">)</tspan></text><text x="463" y="497.5"><tspan fill="#000000">) / 10</tspan></text><text x="423" y="516.5"><tspan fill="#000000">) * 10</tspan></text><text x="423" y="535.5"><tspan fill="#000000">,(</tspan></text><text x="463" y="554.5"><tspan fill="#009900">YEAR</tspan><tspan fill="#000000"> (</tspan></text><text x="503" y="573.5"><tspan fill="#009900">NOW</tspan><tspan fill="#000000"> ()) - </tspan><tspan fill="#009900">YEAR</tspan><tspan fill="#000000"> (</tspan><tspan fill="#ce7b00">&quot;birthday&quot;</tspan><tspan fill="#000000">)</tspan></text><text x="423" y="592.5"><tspan fill="#000000">) - </tspan><tspan fill="#009900">MOD</tspan><tspan fill="#000000">( ( </tspan><tspan fill="#009900">YEAR</tspan><tspan fill="#000000"> ( </tspan><tspan fill="#009900">NOW</tspan><tspan fill="#000000"> ( ) ) - </tspan><tspan fill="#009900">YEAR</tspan><tspan fill="#000000"> ( </tspan><tspan fill="#ce7b00">&quot;birthday&quot;</tspan><tspan fill="#000000"> ) ) ,2 )</tspan></text><text x="383" y="611.5"><tspan fill="#000000">) </tspan><tspan fill="#ce7b00">&quot;age_group&quot;</tspan></text><text x="383" y="630.5"><tspan fill="#000000">,</tspan><tspan fill="#0000e6">COUNT</tspan><tspan fill="#000000"> (</tspan><tspan fill="#ce7b00">&quot;ID&quot;</tspan><tspan fill="#000000">) </tspan><tspan fill="#ce7b00">&quot;quantity&quot;</tspan></text><text x="383" y="649.5"><tspan fill="#000000">,</tspan><tspan fill="#ce7b00">&quot;gender&quot;</tspan></text><text x="343" y="668.5"><tspan fill="#0000e6">FROM</tspan></text><text x="383" y="687.5"><tspan fill="#ce7b00">&quot;starter&quot;</tspan></text><text x="343" y="706.5"><tspan fill="#0000e6">GROUP BY</tspan></text><text x="383" y="725.5"><tspan fill="#ce7b00">&quot;age_group&quot;</tspan></text><text x="383" y="744.5"><tspan fill="#000000">,</tspan><tspan fill="#ce7b00">&quot;gender&quot;</tspan></text><text x="343" y="763.5"><tspan fill="#0000e6">ORDER BY</tspan></text></g>
</svg>
</body></html>
